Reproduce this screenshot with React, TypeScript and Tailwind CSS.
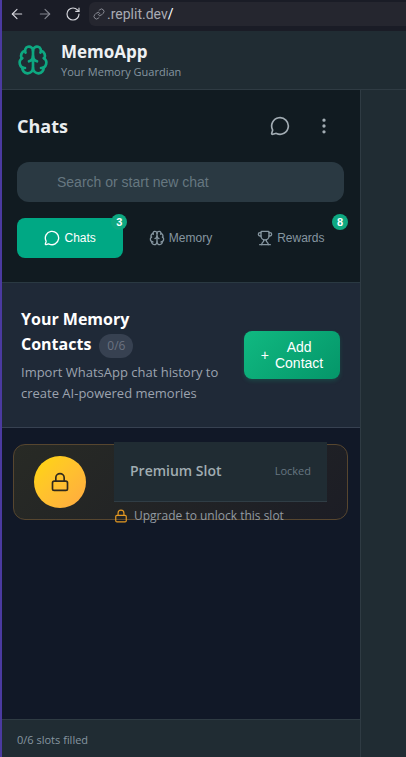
import { ArrowLeft, ArrowRight, Brain, Link, Lock, MessageCircle, MoreVertical, RotateCw, Trophy } from "lucide-react";

const tabs = [
  { label: "Chats", icon: MessageCircle, badge: 3, active: true },
  { label: "Memory", icon: Brain, badge: 0, active: false },
  { label: "Rewards", icon: Trophy, badge: 8, active: false },
];

function BrowserBar() {
  return (
    <div className="flex h-[31px] shrink-0 items-center bg-[#1a1c26] pb-1 pl-[7px] text-[#d5d6dc]">
      <button aria-label="Back" className="w-7"><ArrowLeft size={16} strokeWidth={1.7} /></button>
      <button aria-label="Forward" className="w-7 text-[#84868f]"><ArrowRight size={16} strokeWidth={1.7} /></button>
      <button aria-label="Reload" className="w-6"><RotateCw size={16} strokeWidth={1.7} /></button>
      <div className="flex h-6 flex-1 items-center rounded-l-md bg-[#25262f] pl-1 font-['Roboto',sans-serif] text-sm">
        <Link size={12} strokeWidth={2} className="text-[#888a93]" />
        <span className="pl-0.5 text-[#a9abb3]">.replit.dev<span className="text-white">/</span></span>
      </div>
    </div>
  );
}

function AppHeader() {
  return (
    <header className="flex h-[59px] shrink-0 items-center gap-3 border-b border-[#2f3b43] bg-[#202c33] px-[15px]">
      <Brain size={32} className="text-[#0ea881]" />
      <div>
        <h1 className="text-[17px] leading-6 font-bold text-[#eef1f3]">MemoApp</h1>
        <p className="text-[11px] leading-4 text-[#8696a0]">Your Memory Guardian</p>
      </div>
    </header>
  );
}

function ChatTools() {
  return (
    <section className="border-b border-[#2a3942] bg-[#111b21] pt-4 pr-4 pb-6 pl-[15px]">
      <div className="flex h-10 items-center justify-between">
        <h2 className="text-lg font-bold text-[#e9edef]">Chats</h2>
        <div className="flex gap-1 text-[#a3adb4]">
          <button aria-label="New chat" className="grid size-10 place-items-center"><MessageCircle size={20} /></button>
          <button aria-label="Menu" className="grid size-10 place-items-center"><MoreVertical size={20} /></button>
        </div>
      </div>
      <input
        type="text"
        aria-label="Search chats"
        placeholder="Search or start new chat"
        className="mt-4 block h-10 w-full rounded-xl bg-[#2a3942] pr-4 pl-10 font-['Liberation_Sans',Arial,sans-serif] text-sm text-white outline-none placeholder:text-[#667780]"
      />
      <nav className="mt-4 grid grid-cols-3 gap-1 font-['Liberation_Sans',Arial,sans-serif] text-xs">
        {tabs.map(({ label, icon: Icon, badge, active }) => (
          <button
            key={label}
            className={`relative flex h-10 items-center justify-center gap-1 rounded-lg ${active ? "bg-[#00a884] text-white" : "text-[#8696a0]"}`}
          >
            <Icon size={16} />
            {label}
            {badge > 0 && (
              <span className="absolute -top-1 -right-1 grid size-4 place-items-center rounded-full bg-[#0ea881] text-[11px] font-bold text-white">{badge}</span>
            )}
          </button>
        ))}
      </nav>
    </section>
  );
}

function MemoryContacts() {
  return (
    <section className="flex items-center justify-between gap-4 border-b border-[#374151] bg-[#1f2937] pt-6 pr-5 pb-[23px] pl-[19px]">
      <div className="min-w-0 flex-1">
        <h3 className="text-base leading-[25px] font-bold text-white">
          Your Memory
          <br />
          Contacts
          <span className="ml-2 inline-block rounded-full bg-[#374151] px-2 align-middle text-xs leading-6 font-normal text-[#6b7280]">0/6</span>
        </h3>
        <p className="mt-1 text-[13px] leading-[21px] whitespace-nowrap text-[#9ca3af]">
          Import WhatsApp chat history to
          <br />
          create AI-powered memories
        </p>
      </div>
      <button className="flex h-12 w-24 shrink-0 items-center justify-center gap-1.5 rounded-lg bg-linear-135 from-[#10b981] to-[#059669] font-['Liberation_Sans',Arial,sans-serif] text-sm leading-4 text-white shadow-[0_2px_4px_#10b98133]">
        <span>+</span>
        <span>Add<br />Contact</span>
      </button>
    </section>
  );
}

function PremiumSlot() {
  return (
    <div className="flex h-[76px] items-center rounded-xl border border-[#57462f] bg-linear-135 from-[#282a25] to-[#1c1d25] px-5">
      <div className="grid size-[52px] shrink-0 place-items-center rounded-full bg-linear-135 from-[#ffd700] to-[#ffa940] text-[#30291c]">
        <Lock size={20} />
      </div>
      <div className="ml-7 min-w-0 flex-1">
        <div className="flex h-[60px] items-center justify-between border-b border-[#303d45] bg-[#202c33] px-4">
          <h4 className="text-sm font-semibold text-[#a0adb2]">Premium Slot</h4>
          <span className="text-[11px] text-[#667681]">Locked</span>
        </div>
        <div className="flex items-center gap-1.5 pt-2 text-xs leading-3 text-[#929ba2]">
          <Lock size={14} className="-my-px text-[#e79a22]" />
          Upgrade to unlock this slot
        </div>
      </div>
    </div>
  );
}

export default function App() {
  return (
    <div className="flex min-h-screen flex-col border-l-2 border-[#4b3aa0] bg-[#202c33] font-['Open_Sans','Noto_Sans',sans-serif]">
      <BrowserBar />
      <AppHeader />
      <div className="flex flex-1">
        <aside className="flex min-w-0 flex-1 flex-col border-r border-[#2f3b43] bg-[#111827]">
          <ChatTools />
          <MemoryContacts />
          <div className="flex-1 py-4 pr-3 pl-[11px]">
            <PremiumSlot />
          </div>
          <footer className="flex h-[38px] items-center border-t border-[#2f3b43] bg-[#202c33] px-[15px] pt-1 text-[11px] font-medium text-[#8696a0]">
            0/6 slots filled
          </footer>
        </aside>
        <main className="w-[45px] shrink-0 bg-[#202c33]" />
      </div>
    </div>
  );
}
